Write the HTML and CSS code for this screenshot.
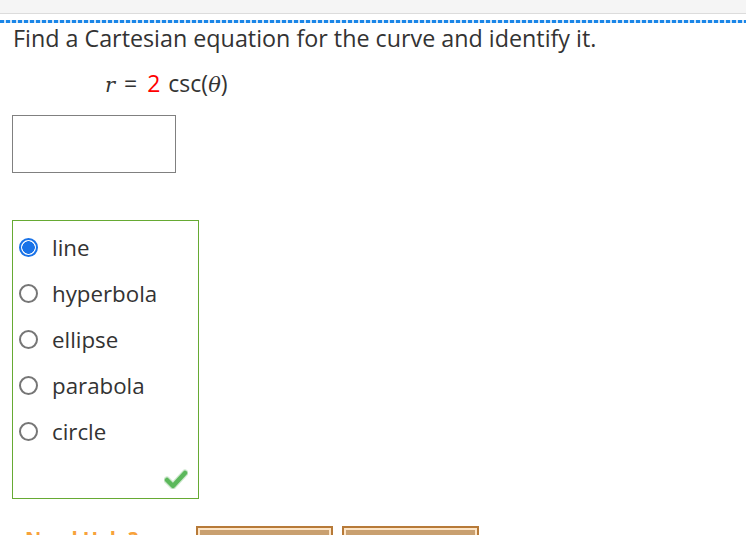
FILE: index.html
```html
<!DOCTYPE html>
<html>
<head>
<meta charset="utf-8">
<link rel="stylesheet" href="styles.css">
</head>
<body>
<div class="topbar"></div>
<div class="dots"></div>
<div class="content">
  <p class="question">Find a Cartesian equation for the curve and identify it.</p>
  <p class="equation"><i class="var">r</i><span class="eq">=</span><span class="red">2</span> csc(<i class="var">θ</i>)</p>
  <div class="answer-box"></div>
  <div class="options">
    <div class="option"><span class="radio checked"></span><span class="label">line</span></div>
    <div class="option"><span class="radio"></span><span class="label">hyperbola</span></div>
    <div class="option"><span class="radio"></span><span class="label">ellipse</span></div>
    <div class="option"><span class="radio"></span><span class="label">parabola</span></div>
    <div class="option"><span class="radio"></span><span class="label">circle</span></div>
    <svg class="check" width="24" height="20" viewBox="0 0 24 20">
      <path d="M3 11 L9 17 L21 4" fill="none" stroke="#cfe8cf" stroke-width="7" stroke-linecap="round" stroke-linejoin="round"/>
      <path d="M3 11 L9 17 L21 4" fill="none" stroke="#5cb85c" stroke-width="4.5" stroke-linecap="round" stroke-linejoin="round"/>
    </svg>
  </div>
  <div class="footer">
    <span class="help">Need Help?</span>
    <span class="btn"></span>
    <span class="btn"></span>
  </div>
</div>
</body>
</html>
```
FILE: styles.css
```css
html, body {
  margin: 0;
  padding: 0;
  background: #fff;
  overflow: hidden;
}
body {
  font-family: "Open Sans", "DejaVu Sans", sans-serif;
  color: #333;
}
.topbar {
  height: 13px;
  background: #f5f5f5;
  border-bottom: 1px solid #dcdcdc;
}
.dots {
  margin-top: 6px;
  height: 3px;
  background: repeating-linear-gradient(90deg, #1a86e8 0 4px, #cfe3f7 4px 6px);
}
.content {
  padding-left: 12px;
}
.question {
  margin: 1px 0 0 1px;
  font-size: 23.3px;
  line-height: 28px;
}
.equation {
  margin: 17px 0 0 93px;
  font-size: 23px;
  line-height: 28px;
}
.var {
  font-family: "DejaVu Serif", serif;
  font-style: italic;
  font-size: 21px;
}
.eq {
  margin: 0 10px 0 9px;
}
.red {
  color: #f00;
  margin-right: 2px;
}
.answer-box {
  margin-top: 16px;
  width: 162px;
  height: 56px;
  border: 1px solid #808080;
}
.options {
  position: relative;
  margin-top: 47px;
  width: 185px;
  height: 266px;
  border: 1px solid #66aa33;
  padding-top: 11px;
}
.option {
  display: flex;
  align-items: center;
  height: 46px;
  margin-top: -8px;
  margin-bottom: 8px;
}
.radio {
  width: 15px;
  height: 15px;
  border: 2px solid #767676;
  border-radius: 50%;
  margin-left: 6px;
  margin-right: 14px;
  flex: none;
}
.radio.checked {
  border-color: #1a73e8;
  background: radial-gradient(circle, #1a73e8 0 6px, #fff 6.5px);
}
.label {
  font-size: 22.3px;
}
.check {
  position: absolute;
  right: 10px;
  bottom: 9px;
}
.footer {
  margin-top: 27px;
  display: flex;
  align-items: flex-start;
}
.help {
  margin-left: 13px;
  margin-top: 3px;
  font-size: 20px;
  line-height: 20px;
  font-weight: bold;
  color: #f7a23b;
  width: 171px;
}
.btn {
  width: 133px;
  height: 20px;
  background: #fcd8ae;
  border: 2px solid #b77a38;
  box-shadow: inset 0 0 0 2px #fee6c8, inset 0 3px 0 4px #c9a070;
  margin-right: 9px;
}
```
